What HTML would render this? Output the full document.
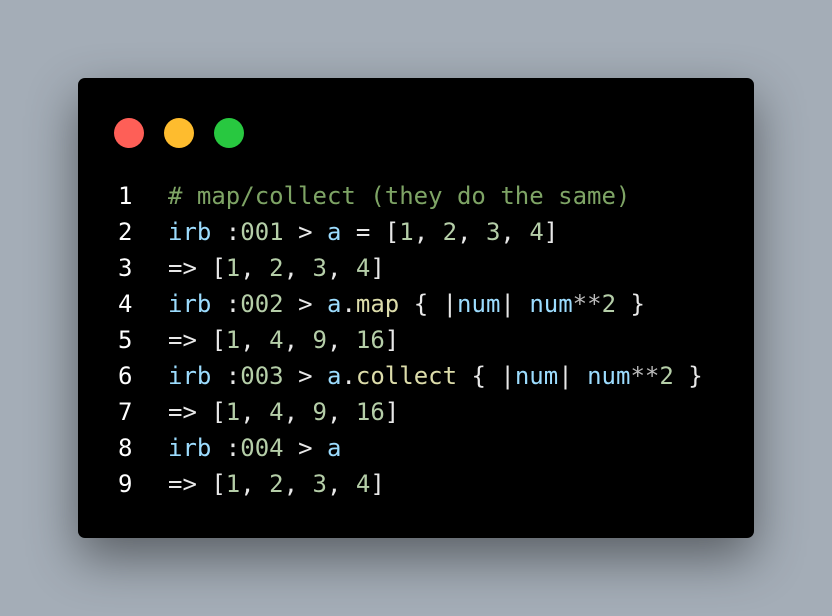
<!DOCTYPE html>
<html><head><style>
html,body{margin:0;padding:0;width:832px;height:616px;overflow:hidden;background:#a4adb7;}
.win{position:absolute;left:78px;top:78px;width:676px;height:460px;background:#000;border-radius:7px;box-shadow:0 20px 50px rgba(0,0,0,0.45);}
.dot{position:absolute;top:40px;width:30px;height:30px;border-radius:50%;}
.code{position:absolute;left:40px;top:100px;font-family:"DejaVu Sans Mono","Liberation Mono",monospace;font-size:24px;line-height:36px;color:#e8e8e8;white-space:pre;}
.n{display:inline-block;width:50px;color:#fff;}
.c{color:#7ea465}.b{color:#9cdcfe}.g{color:#b5cea8}.y{color:#dcdcaa}.w{color:#e8e8e8}.s{color:#bbb}
</style></head><body>
<div class="win">
<div class="dot" style="left:36px;background:#fe5f57"></div>
<div class="dot" style="left:86px;background:#febc2e"></div>
<div class="dot" style="left:136px;background:#28c840"></div>
<div class="code"><span class="n">1</span><span class="c"># map/collect (they do the same)</span>
<span class="n">2</span><span class="b">irb</span> :<span class="g">001</span> &gt; <span class="b">a</span> = [<span class="g">1</span>, <span class="g">2</span>, <span class="g">3</span>, <span class="g">4</span>]
<span class="n">3</span>=&gt; [<span class="g">1</span>, <span class="g">2</span>, <span class="g">3</span>, <span class="g">4</span>]
<span class="n">4</span><span class="b">irb</span> :<span class="g">002</span> &gt; <span class="b">a</span>.<span class="y">map</span> { |<span class="b">num</span>| <span class="b">num</span><span class="s">**</span><span class="g">2</span> }
<span class="n">5</span>=&gt; [<span class="g">1</span>, <span class="g">4</span>, <span class="g">9</span>, <span class="g">16</span>]
<span class="n">6</span><span class="b">irb</span> :<span class="g">003</span> &gt; <span class="b">a</span>.<span class="y">collect</span> { |<span class="b">num</span>| <span class="b">num</span><span class="s">**</span><span class="g">2</span> }
<span class="n">7</span>=&gt; [<span class="g">1</span>, <span class="g">4</span>, <span class="g">9</span>, <span class="g">16</span>]
<span class="n">8</span><span class="b">irb</span> :<span class="g">004</span> &gt; <span class="b">a</span>
<span class="n">9</span>=&gt; [<span class="g">1</span>, <span class="g">2</span>, <span class="g">3</span>, <span class="g">4</span>]</div>
</div>
</body></html>
